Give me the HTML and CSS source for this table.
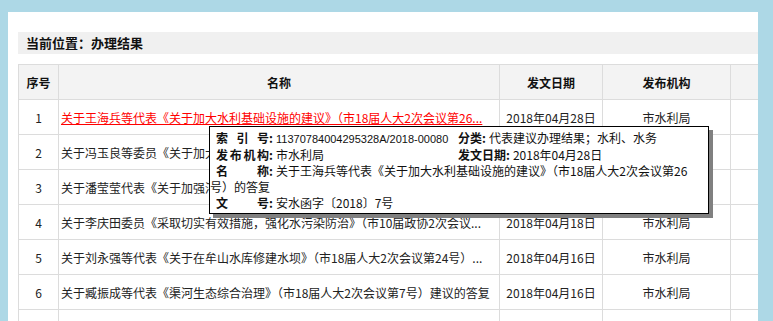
FILE: index.html
```html
<!DOCTYPE html>
<html lang="zh-CN">
<head>
<meta charset="utf-8">
<title>办理结果</title>
<link rel="stylesheet" href="styles.css">
</head>
<body>
<div class="panel">
  <div class="crumb">当前位置：办理结果</div>
  <table class="list">
    <colgroup>
      <col class="c-no"><col class="c-name"><col class="c-date"><col class="c-org"><col class="c-rest">
    </colgroup>
    <thead>
      <tr><th>序号</th><th>名称</th><th>发文日期</th><th>发布机构</th><th></th></tr>
    </thead>
    <tbody>
      <tr><td class="no">1</td><td class="name"><a class="hover">关于王海兵等代表《关于加大水利基础设施的建议》（市18届人大2次会议第26...</a></td><td class="date">2018年04月28日</td><td class="org">市水利局</td><td></td></tr>
      <tr><td class="no">2</td><td class="name">关于冯玉良等委员《关于加大农村饮水安全工程建设力度的建议》（市10届...</td><td class="date">2018年04月28日</td><td class="org">市水利局</td><td></td></tr>
      <tr><td class="no">3</td><td class="name">关于潘莹莹代表《关于加强河道管理的建议》（市18届人大2次会议第...</td><td class="date">2018年04月18日</td><td class="org">市水利局</td><td></td></tr>
      <tr><td class="no">4</td><td class="name">关于李庆田委员《采取切实有效措施，强化水污染防治》（市10届政协2次会议...</td><td class="date">2018年04月18日</td><td class="org">市水利局</td><td></td></tr>
      <tr><td class="no">5</td><td class="name">关于刘永强等代表《关于在牟山水库修建水坝》（市18届人大2次会议第24号）...</td><td class="date">2018年04月16日</td><td class="org">市水利局</td><td></td></tr>
      <tr><td class="no">6</td><td class="name">关于臧振成等代表《渠河生态综合治理》（市18届人大2次会议第7号）建议的答复</td><td class="date">2018年04月16日</td><td class="org">市水利局</td><td></td></tr>
      <tr><td class="no"></td><td class="name"></td><td class="date"></td><td class="org"></td><td></td></tr>
    </tbody>
  </table>

  <div class="tip">
    <div class="tip-row">
      <div class="tip-cell wide"><span class="lab just"><i>索</i><i>引</i><i>号:</i></span><span class="val num">11370784004295328A/2018-00080</span></div>
      <div class="tip-cell"><span class="lab">分类:</span><span class="val">代表建议办理结果；水利、水务</span></div>
    </div>
    <div class="tip-row">
      <div class="tip-cell wide"><span class="lab just"><i>发</i><i>布</i><i>机</i><i>构:</i></span><span class="val">市水利局</span></div>
      <div class="tip-cell"><span class="lab">发文日期:</span><span class="val">2018年04月28日</span></div>
    </div>
    <div class="tip-line"><span class="lab just"><i>名</i><i>称:</i></span><span class="val">关于王海兵等代表《关于加大水利基础设施的建议》（市18届人大2次会议第26号）的答复</span></div>
    <div class="tip-line"><span class="lab just"><i>文</i><i>号:</i></span><span class="val">安水函字〔2018〕7号</span></div>
  </div>
</div>
</body>
</html>
```

FILE: styles.css
```css
* { box-sizing: border-box; }

html, body {
  margin: 0;
  padding: 0;
  height: 100%;
  overflow: hidden;
}

body {
  background: #add8e6;
  font-family: "Microsoft YaHei", "Noto Sans CJK SC", sans-serif;
  font-size: 12px;
  color: #222;
}

.panel {
  position: relative;
  width: 750px;
  height: 320px;
  margin: 12px 0 0 8px;
  padding: 20px 0 0 10px;
  background: #fff;
  overflow: hidden;
}

.crumb {
  height: 22px;
  line-height: 22px;
  padding-left: 8px;
  background: #f0f0f0;
  font-size: 13px;
  font-weight: bold;
  color: #111;
  margin-bottom: 10px;
}

.list {
  table-layout: fixed;
  width: 751px;
  border-collapse: separate;
  border-spacing: 0;
  border-top: 1px solid #dcdcdc;
  border-left: 1px solid #dcdcdc;
}

.c-no { width: 40px; }
.c-name { width: 441px; }
.c-date { width: 103px; }
.c-org { width: 128px; }
.c-rest { width: 38px; }

.list th,
.list td {
  height: 35px;
  padding: 0;
  border-right: 1px solid #dcdcdc;
  border-bottom: 1px solid #dcdcdc;
  white-space: nowrap;
  overflow: hidden;
  text-align: center;
  vertical-align: middle;
}

.list th {
  background: #f3f3f3;
  font-weight: bold;
  color: #111;
}

.list td.name {
  text-align: left;
  padding-left: 2px;
}

.hover {
  color: #ff0000;
  text-decoration: underline;
}

.tip {
  position: absolute;
  left: 201px;
  top: 114px;
  width: 500px;
  height: 88px;
  padding: 3px 10px 3px 0;
  background: #fff;
  border: 1px solid #000;
  box-shadow: 4px 4px 0 #808080;
  line-height: 16px;
  color: #111;
}

.tip-row {
  display: flex;
  white-space: nowrap;
}

.tip-cell.wide {
  flex: 0 0 248px;
  width: 248px;
}

.val.num {
  font-family: "Liberation Sans", "Noto Sans CJK SC", sans-serif;
  font-size: 11px;
}

.lab {
  display: inline-block;
  font-weight: bold;
  margin-left: 6px;
  margin-right: 3px;
}

.lab.just {
  display: inline-flex;
  justify-content: space-between;
  width: 57px;
  vertical-align: top;
}

.lab i {
  font-style: normal;
}

.tip-cell .lab:not(.just) {
  margin-left: 0;
}
```
